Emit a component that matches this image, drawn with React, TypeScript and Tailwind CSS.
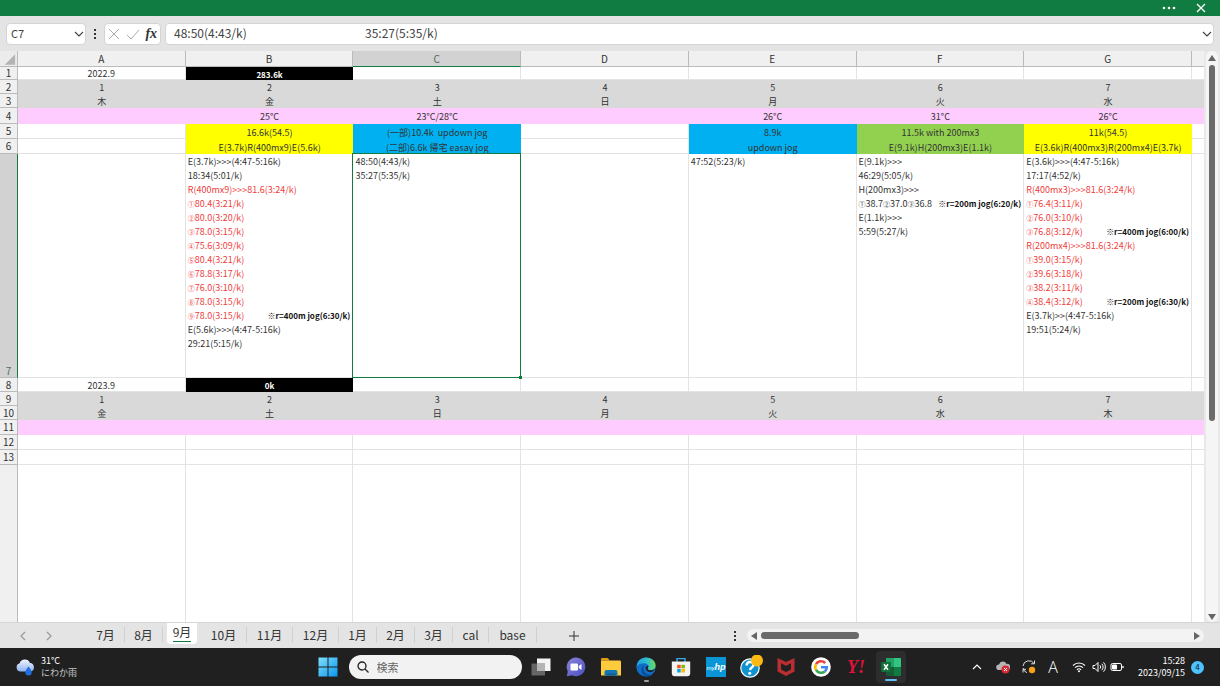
import React, { useState } from "react";
import clsx from "clsx";

interface ILine {
  text: string;
  red?: boolean;
  note?: string;
}

interface ITab {
  name: string;
  width: string;
}

const columns = ["A", "B", "C", "D", "E", "F", "G"];
const days = ["1", "2", "3", "4", "5", "6", "7"];
const weekdays2022 = ["木", "金", "土", "日", "月", "火", "水"];
const weekdays2023 = ["金", "土", "日", "月", "火", "水", "木"];
const temps = ["", "25°C", "23°C/28°C", "", "26°C", "31°C", "26°C"];
const fills = [
  "",
  "bg-[#ffff00]",
  "bg-[#00b0f0]",
  "",
  "bg-[#00b0f0]",
  "bg-[#92d050]",
  "bg-[#ffff00]",
];
const menuTop = [
  "",
  "16.6k(54.5)",
  "(一部)10.4k  updown jog",
  "",
  "8.9k",
  "11.5k with 200mx3",
  "11k(54.5)",
];
const menuBottom = [
  "",
  "E(3.7k)R(400mx9)E(5.6k)",
  "(二部)6.6k 帰宅 easay jog",
  "",
  "updown jog",
  "E(9.1k)H(200mx3)E(1.1k)",
  "E(3.6k)R(400mx3)R(200mx4)E(3.7k)",
];

const logs: ILine[][] = [
  [],
  [
    { text: "E(3.7k)>>>(4:47-5:16k)" },
    { text: "18:34(5:01/k)" },
    { text: "R(400mx9)>>>81.6(3:24/k)", red: true },
    { text: "①80.4(3:21/k)", red: true },
    { text: "②80.0(3:20/k)", red: true },
    { text: "③78.0(3:15/k)", red: true },
    { text: "④75.6(3:09/k)", red: true },
    { text: "⑤80.4(3:21/k)", red: true },
    { text: "⑥78.8(3:17/k)", red: true },
    { text: "⑦76.0(3:10/k)", red: true },
    { text: "⑧78.0(3:15/k)", red: true },
    { text: "⑨78.0(3:15/k)", red: true, note: "※r=400m jog(6:30/k)" },
    { text: "E(5.6k)>>>(4:47-5:16k)" },
    { text: "29:21(5:15/k)" },
  ],
  [{ text: "48:50(4:43/k)" }, { text: "35:27(5:35/k)" }],
  [],
  [{ text: "47:52(5:23/k)" }],
  [
    { text: "E(9.1k)>>>" },
    { text: "46:29(5:05/k)" },
    { text: "H(200mx3)>>>" },
    { text: "①38.7②37.0③36.8", note: "※r=200m jog(6:20/k)" },
    { text: "E(1.1k)>>>" },
    { text: "5:59(5:27/k)" },
  ],
  [
    { text: "E(3.6k)>>>(4:47-5:16k)" },
    { text: "17:17(4:52/k)" },
    { text: "R(400mx3)>>>81.6(3:24/k)", red: true },
    { text: "①76.4(3:11/k)", red: true },
    { text: "②76.0(3:10/k)", red: true },
    { text: "③76.8(3:12/k)", red: true, note: "※r=400m jog(6:00/k)" },
    { text: "R(200mx4)>>>81.6(3:24/k)", red: true },
    { text: "①39.0(3:15/k)", red: true },
    { text: "②39.6(3:18/k)", red: true },
    { text: "③38.2(3:11/k)", red: true },
    { text: "④38.4(3:12/k)", red: true, note: "※r=200m jog(6:30/k)" },
    { text: "E(3.7k)>>(4:47-5:16k)" },
    { text: "19:51(5:24/k)" },
  ],
];

const tabs: ITab[] = [
  { name: "7月", width: "w-[38px]" },
  { name: "8月", width: "w-[38px]" },
  { name: "9月", width: "w-[38px]" },
  { name: "10月", width: "w-[46px]" },
  { name: "11月", width: "w-[46px]" },
  { name: "12月", width: "w-[46px]" },
  { name: "1月", width: "w-[38px]" },
  { name: "2月", width: "w-[38px]" },
  { name: "3月", width: "w-[38px]" },
  { name: "cal", width: "w-[36px]" },
  { name: "base", width: "w-[48px]" },
];

const Chevron = ({ d, className }: { d: string; className?: string }) => (
  <svg viewBox="0 0 10 10" className={clsx("size-2.5", className)} fill="none" stroke="currentColor" strokeWidth="1.2">
    <path d={d} />
  </svg>
);

const Dots = () => (
  <svg viewBox="0 0 4 10" className="w-1 h-2.5" fill="#333">
    <rect x="1" y="0" width="2" height="2" />
    <rect x="1" y="4" width="2" height="2" />
    <rect x="1" y="8" width="2" height="2" />
  </svg>
);

function FormulaBar() {
  const [formula, setFormula] = useState(
    "48:50(4:43/k)" + " ".repeat(44) + "35:27(5:35/k)"
  );

  return (
    <div className="flex items-center h-[35px] pl-1.5 pr-1.5 bg-[#e4e4e4] text-[#444]">
      <div className="relative w-20 h-[22px]">
        <select
          aria-label="名前ボックス"
          className="block w-full h-full appearance-none rounded-sm border border-[#d4d4d4] bg-white pl-1 text-[11px]"
        >
          <option>C7</option>
        </select>
        <Chevron d="M1 3l4 4 4-4" className="absolute right-0.5 top-1.5 pointer-events-none" />
      </div>
      <div className="w-[18px] flex justify-center">
        <Dots />
      </div>
      <div className="flex items-center justify-around w-[57px] h-[22px] rounded-sm border border-[#d4d4d4] bg-white">
        <button type="button" aria-label="キャンセル">
          <svg viewBox="0 0 12 12" className="size-3" fill="none" stroke="#aaa">
            <path d="M1 1l10 10M11 1L1 11" />
          </svg>
        </button>
        <button type="button" aria-label="入力">
          <svg viewBox="0 0 14 12" className="w-3.5 h-3" fill="none" stroke="#aaa">
            <path d="M1 7l4 4L13 2" />
          </svg>
        </button>
        <button
          type="button"
          className="font-['Liberation_Serif',serif] italic font-bold text-sm leading-4 text-[#333]"
        >
          fx
        </button>
      </div>
      <div className="relative flex-1 ml-1 h-[22px]">
        <input
          aria-label="数式バー"
          value={formula}
          onChange={(e) => setFormula(e.target.value)}
          className="block w-full h-full rounded-sm border border-[#d4d4d4] bg-white pl-2 pb-0.5 text-[12px]"
        />
        <Chevron d="M1 3l4 4 4-4" className="absolute right-0.5 top-1.5 pointer-events-none" />
      </div>
    </div>
  );
}

function RowHead({ n, selected }: { n: string; selected?: boolean }) {
  return (
    <th
      scope="row"
      className={clsx(
        "p-0 border-r border-b font-normal text-[10px] leading-3 text-center",
        selected
          ? "bg-[#d2d2d2] border-r-[#107c41] border-b-[#bbb] text-[#4d6f5c] align-bottom"
          : "bg-[#f0f0f0] border-[#bbb] text-[#333]"
      )}
    >
      {n}
    </th>
  );
}

interface RowProps {
  n: string;
  cells: string[];
  height: string;
  fill?: string;
  cellFills?: string[];
}

function Row({ n, cells, height, fill, cellFills }: RowProps) {
  return (
    <tr className={height}>
      <RowHead n={n} />
      {columns.map((col, i) => {
        const bg = fill || (cellFills && cellFills[i]);
        return (
          <td
            key={col}
            className={clsx(
              "p-0 pt-px text-center whitespace-pre",
              bg || "border-r border-b border-[#e3e3e3]",
              bg === "bg-black" && "font-bold text-[8px] text-white"
            )}
          >
            {cells[i]}
          </td>
        );
      })}
      <td className={clsx("p-0", fill || "border-b border-[#e3e3e3]")}></td>
    </tr>
  );
}

// circled numbers are set a little smaller than the times next to them
function LogLine({ line }: { line: ILine }) {
  return (
    <div className="flex justify-between px-0.5 h-3.5 leading-[14px] whitespace-nowrap">
      <span className={line.red ? "text-[#f03c3c]" : ""}>
        {line.text.split(/([①-⑨])/).map((part, i) =>
          i % 2 ? (
            <span key={i} className="text-[7px]">
              {part}
            </span>
          ) : (
            part
          )
        )}
      </span>
      {line.note && <b className="text-[8px] text-[#111]">{line.note}</b>}
    </div>
  );
}

function Sheet() {
  const blank = ["", "", "", "", "", "", ""];
  const totalFills = ["", "bg-black", "", "", "", "", ""];
  return (
    <div className="flex-1 min-w-0">
      <table className="w-full h-full table-fixed border-separate border-spacing-0 bg-white text-[9px] leading-[11px] text-[#333]">
        <colgroup>
          <col className="w-[18px]" />
          {columns.map((col) => (
            <col key={col} />
          ))}
          <col className="w-3" />
        </colgroup>
        <thead>
          <tr className="h-4">
            <th className="p-0 bg-[#ececec] border-r border-b border-[#bbb]">
              <svg viewBox="0 0 18 14" className="w-[17px] h-3.5">
                <path d="M16 2v11H5z" fill="#b4b4b4" />
              </svg>
            </th>
            {columns.map((col) => (
              <th
                key={col}
                scope="col"
                className={clsx(
                  "p-0 border-r border-b font-normal text-[10px] leading-3",
                  col === "C"
                    ? "bg-[#d2d2d2] border-r-[#bbb] border-b-[#107c41] text-[#4d6f5c]"
                    : "bg-[#f0f0f0] border-[#bbb]"
                )}
              >
                {col}
              </th>
            ))}
            <th className="p-0 bg-[#f0f0f0] border-b border-[#bbb]"></th>
          </tr>
        </thead>
        <tbody>
          <Row n="1" height="h-[13px]" cells={["2022.9", "283.6k", "", "", "", "", ""]} cellFills={totalFills} />
          <Row n="2" height="h-3.5" cells={days} fill="bg-[#d9d9d9]" />
          <Row n="3" height="h-3.5" cells={weekdays2022} fill="bg-[#d9d9d9]" />
          <Row n="4" height="h-4" cells={temps} fill="bg-[#ffccff]" />
          <Row n="5" height="h-[15px]" cells={menuTop} cellFills={fills} />
          <Row n="6" height="h-[15px]" cells={menuBottom} cellFills={fills} />
          <tr className="h-56">
            <RowHead n="7" selected />
            {columns.map((col, i) => (
              <td
                key={col}
                className="relative p-0 pt-px border-r border-b border-[#e3e3e3] align-top"
              >
                {logs[i].map((line) => (
                  <LogLine key={line.text} line={line} />
                ))}
                {col === "C" && (
                  <div className="absolute -inset-px z-10 border border-[#107c41] pointer-events-none">
                    <span className="absolute -right-0.5 -bottom-0.5 size-[3px] bg-[#107c41]"></span>
                  </div>
                )}
              </td>
            ))}
            <td className="p-0 border-b border-[#e3e3e3]"></td>
          </tr>
          <Row n="8" height="h-3.5" cells={["2023.9", "0k", "", "", "", "", ""]} cellFills={totalFills} />
          <Row n="9" height="h-3.5" cells={days} fill="bg-[#d9d9d9]" />
          <Row n="10" height="h-3.5" cells={weekdays2023} fill="bg-[#d9d9d9]" />
          <Row n="11" height="h-[15px]" cells={blank} fill="bg-[#ffccff]" />
          <Row n="12" height="h-[15px]" cells={blank} />
          <Row n="13" height="h-[15px]" cells={blank} />
          <tr>
            <td className="p-0 bg-[#f0f0f0] border-r border-[#bbb]"></td>
            {columns.map((col) => (
              <td key={col} className="p-0 border-r border-[#e3e3e3]"></td>
            ))}
            <td className="p-0"></td>
          </tr>
        </tbody>
      </table>
    </div>
  );
}

function VerticalScroll() {
  return (
    <div className="w-4 flex flex-col items-center bg-[#e8e8e8] px-0.5">
      <div className="flex-1 w-3 flex flex-col items-center rounded-full bg-[#f5f5f5] pt-1 pb-0.5">
        <svg viewBox="0 0 8 6" className="w-2 h-1.5" fill="#666">
          <path d="M4 0l4 6H0z" />
        </svg>
        <div className="w-1.5 h-[63%] mt-1 rounded-full bg-[#6b6b6b]"></div>
        <svg viewBox="0 0 8 6" className="w-2 h-1.5 mt-auto" fill="#666">
          <path d="M4 6l4-6H0z" />
        </svg>
      </div>
    </div>
  );
}

function TabBar() {
  const [active, setActive] = useState("9月");

  return (
    <div className="flex items-center h-[26px] bg-[#e4e4e4] border-t border-[#d6d6d6] text-[#333]">
      <div className="flex w-[87px] pl-[18px] gap-4 text-[#999]">
        <button type="button" aria-label="前のシート">
          <Chevron d="M7 1L3 5l4 4" />
        </button>
        <button type="button" aria-label="次のシート">
          <Chevron d="M3 1l4 4-4 4" />
        </button>
      </div>
      {tabs.map((tab) => (
        <button
          key={tab.name}
          type="button"
          onClick={() => setActive(tab.name)}
          className={clsx(
            "flex justify-center h-full pb-1 text-[12px] leading-4",
            tab.width
          )}
        >
          {active === tab.name ? (
            <span className="h-full px-1.5 rounded-b-sm bg-white">
              <span className="block h-[19px] pt-px border-b border-[#107c41]">{tab.name}</span>
            </span>
          ) : (
            <span className="w-full h-4 mt-1 border-r border-[#d0d0d0]">{tab.name}</span>
          )}
        </button>
      ))}
      <button type="button" aria-label="新しいシート" className="ml-8">
        <svg viewBox="0 0 10 10" className="size-2.5" stroke="#333">
          <path d="M5 0v10M0 5h10" />
        </svg>
      </button>
      <div className="flex-1 flex justify-end pr-2.5">
        <Dots />
      </div>
      <div className="flex items-center w-3/8 h-[13px] mr-4 px-1 rounded-full bg-[#f3f3f3]">
        <svg viewBox="0 0 6 8" className="w-1.5 h-2" fill="#666">
          <path d="M0 4l6-4v8z" />
        </svg>
        <div className="ml-1 w-[22%] h-[7px] rounded-full bg-[#6b6b6b]"></div>
        <svg viewBox="0 0 6 8" className="w-1.5 h-2 ml-auto" fill="#666">
          <path d="M6 4L0 0v8z" />
        </svg>
      </div>
    </div>
  );
}

function TaskButton({ label, children }: { label: string; children: React.ReactNode }) {
  return (
    <button type="button" aria-label={label} className="relative flex items-center justify-center w-[35px] h-full">
      {children}
    </button>
  );
}

function Taskbar() {
  return (
    <div className="grid grid-cols-[1fr_auto_1fr] h-[38px] bg-[#202020] text-white text-[9px] leading-3">
      <div className="flex items-center gap-1.5 pl-[15px]">
        <svg viewBox="0 0 20 20" className="size-5">
          <defs>
            <linearGradient id="cloud" x1="0" y1="0" x2="0" y2="1">
              <stop offset="0" stopColor="#f0f5ff" />
              <stop offset="1" stopColor="#8fb2ee" />
            </linearGradient>
          </defs>
          <path d="M5 14.5a4.3 4.3 0 0 1-.4-8.3A5.6 5.6 0 0 1 15 6a4.3 4.3 0 0 1 .5 8.5z" fill="url(#cloud)" />
          <path d="M13.5 9.5c2 2.500 3.200 4 3.200 5.700a3.200 3.200 0 0 1-6.400 0c0-1.700 1.200-3.200 3.200-5.700z" fill="#1f6fe0" />
        </svg>
        <div>
          <div>31°C</div>
          <div className="text-[#c8c8c8]">にわか雨</div>
        </div>
      </div>

      <div className="flex items-center pl-1.5">
        <button type="button" aria-label="スタート">
          <svg viewBox="0 0 20 20" className="size-5">
            <defs>
              <linearGradient id="win" x1="0" y1="0" x2="1" y2="1">
                <stop offset="0" stopColor="#7fe0fb" />
                <stop offset="1" stopColor="#0a95ee" />
              </linearGradient>
            </defs>
            <path d="M.5.5h9v9h-9zM10.500.5h9v9h-9zM.5 10.500h9v9h-9zM10.500 10.500h9v9h-9z" fill="url(#win)" />
          </svg>
        </button>
        <div className="relative ml-[11px] mr-0.5">
          <svg viewBox="0 0 12 12" className="absolute left-2 top-1.5 size-3" fill="none" stroke="#222" strokeWidth="1.3">
            <circle cx="5" cy="5" r="4" />
            <path d="M8 8l3.500 3.500" />
          </svg>
          <input
            type="text"
            aria-label="検索"
            placeholder="検索"
            className="block w-[173px] h-6 rounded-full bg-[#f2f2f2] pl-7 text-[11px] text-[#333] placeholder:text-[#666]"
          />
        </div>
        <TaskButton label="タスク ビュー">
          <svg viewBox="0 0 20 20" className="size-5">
            <path d="M6 1.500h13.500V14H6z" fill="#f4f4f4" />
            <path d="M.5 6.500h13.500v12H.5z" fill="#6e6e6e" opacity=".9" />
            <path d="M6 6.500h8V14H6z" fill="#b5b5b5" />
          </svg>
        </TaskButton>
        <TaskButton label="チャット">
          <svg viewBox="0 0 20 20" className="size-5">
            <defs>
              <linearGradient id="chat" x1="0" y1="0" x2="1" y2="1">
                <stop offset="0" stopColor="#8a86d8" />
                <stop offset="1" stopColor="#4b4fc4" />
              </linearGradient>
            </defs>
            <path d="M10 .6a9.300 9.300 0 1 1-4 17.700L.8 19.200l1-4.800A9.300 9.300 0 0 1 10 .6z" fill="url(#chat)" />
            <rect x="4.500" y="6.500" width="7.500" height="7" rx="1.200" fill="#fff" />
            <path d="M12.800 9l2.700-2v6l-2.700-2z" fill="#fff" />
          </svg>
        </TaskButton>
        <TaskButton label="エクスプローラー">
          <svg viewBox="0 0 20 20" className="size-5">
            <path d="M0 2.200A1.200 1.200 0 0 1 1.200 1h5.600l2 2.500H0z" fill="#e39b0c" />
            <path d="M0 3.500h18.800A1.200 1.200 0 0 1 20 4.700V18.500H0z" fill="#fdcb3c" />
            <path d="M3.500 18.500V15a2 2 0 0 1 2-2h9a2 2 0 0 1 2 2v3.500z" fill="#1477b4" />
            <path d="M5.500 16.500h9v2h-9z" fill="#0e5f95" />
          </svg>
        </TaskButton>
        <TaskButton label="Edge">
          <svg viewBox="0 0 20 20" className="size-5">
            <defs>
              <linearGradient id="edge" x1="0" y1="0" x2="1" y2="0">
                <stop offset="0" stopColor="#1b9de2" />
                <stop offset=".6" stopColor="#35c1c8" />
                <stop offset="1" stopColor="#6fdc4c" />
              </linearGradient>
            </defs>
            <circle cx="10" cy="10" r="9.600" fill="#0f6fc6" />
            <path d="M.5 9.500C1 4 5 .4 10 .4c6 0 9.600 4 9.600 8.100 0 3-2.200 4.800-4.900 4.800-2 0-3-.8-3-1.500s.8-.9.8-2.300c0-1.700-1.800-3.300-4.300-3.300C4.500 6.200 1.500 8 .5 9.500z" fill="url(#edge)" />
            <path d="M7.200 10.800c0 4.200 3.700 7 7.300 7 1.500 0 2.700-.4 3.500-1.200a9.600 9.600 0 0 1-7 3C6.500 19 4.500 15 5.500 11.500c.5-1.700 1.700-3 3.500-3.800-1.200.8-1.800 1.900-1.800 3.100z" fill="#0b4f9c" />
            <path d="M12.200 8.500c.5 1.200-.5 2-.5 3.300 0 1 1.500 1.700 3 1.500 1.500 0 3-.6 4-1.500-1 3-3.500 3.700-5.500 3.300-2.700-.5-4-3-3.400-5z" fill="#202020" />
          </svg>
          <span className="absolute bottom-1 w-[5px] h-0.5 rounded-full bg-[#a0a0a0]"></span>
        </TaskButton>
        <TaskButton label="Microsoft Store">
          <svg viewBox="0 0 20 20" className="size-5">
            <path d="M6 5V1.600h8V5" fill="none" stroke="#35a9e0" strokeWidth="1.400" />
            <path d="M.8 4.500h18.400v12.300a2.400 2.400 0 0 1-2.400 2.400H3.200a2.400 2.400 0 0 1-2.400-2.400z" fill="#f3f3f3" />
            <path d="M6.200 7.800h3.500v3.500H6.200z" fill="#f25022" />
            <path d="M10.400 7.800h3.500v3.500h-3.500z" fill="#7fba00" />
            <path d="M6.200 12h3.500v3.500H6.200z" fill="#00a4ef" />
            <path d="M10.400 12h3.500v3.500h-3.500z" fill="#ffb900" />
          </svg>
        </TaskButton>
        <TaskButton label="myHP">
          <span className="flex items-baseline justify-center size-5 pt-1 bg-[#0a96d6] font-['Liberation_Sans',sans-serif] italic text-[6px] leading-3">
            my<b className="text-[9px]">hp</b>
          </span>
        </TaskButton>
        <TaskButton label="ヘルプ">
          <svg viewBox="0 0 24 24" className="size-6">
            <circle cx="11" cy="13" r="9.200" fill="#1193d0" stroke="#fff" strokeWidth="1.200" />
            <path d="M7.500 10.500c.3-2.500 2-3.700 4-3.500 2.200.2 3.300 1.800 2.900 3.400-.4 1.800-3 2-3.400 4.600" fill="none" stroke="#fff" strokeWidth="2.400" />
            <circle cx="10.700" cy="18.300" r="1.500" fill="#fff" />
            <circle cx="18" cy="5.500" r="6" fill="#fdb913" />
          </svg>
        </TaskButton>
        <TaskButton label="McAfee">
          <svg viewBox="0 0 20 20" className="size-5">
            <path d="M1.500 1L10 5l8.500-4v13.500L10 19l-8.500-4.500zM5 6.300v6.200L10 15l5-2.500V6.300L10 8.700z" fill="#b92e33" fillRule="evenodd" />
          </svg>
        </TaskButton>
        <TaskButton label="Google">
          <svg viewBox="0 0 20 20" className="size-5">
            <circle cx="10" cy="10" r="9.800" fill="#fff" />
            <g fill="none" strokeWidth="2.600">
              <path d="M14.200 6A5.800 5.800 0 0 0 5 7.200" stroke="#ea4335" />
              <path d="M5 7.200a5.800 5.800 0 0 0 0 5.600" stroke="#fbbc05" />
              <path d="M5 12.800a5.800 5.800 0 0 0 8.800 1.600" stroke="#34a853" />
              <path d="M13.800 14.400a5.800 5.800 0 0 0 2-4.200H10" stroke="#4285f4" />
            </g>
          </svg>
        </TaskButton>
        <TaskButton label="Yahoo">
          <span className="font-['Liberation_Serif',serif] italic font-bold text-lg leading-none text-[#e0123c]">
            Y!
          </span>
        </TaskButton>
        <TaskButton label="Excel">
          <span className="relative flex items-center justify-center w-[30px] h-8 rounded-sm bg-[#2d2d2d]">
            <svg viewBox="0 0 20 18" className="w-5 h-[18px]">
              <path d="M5 0h8v9H5z" fill="#21a366" />
              <path d="M13 0h6a1 1 0 0 1 1 1v8h-7z" fill="#33c481" />
              <path d="M5 9h8v9H6a1 1 0 0 1-1-1z" fill="#185c37" />
              <path d="M13 9h7v8a1 1 0 0 1-1 1h-6z" fill="#107c41" />
              <rect x="0" y="4" width="10" height="10" rx="1" fill="#0f7038" />
              <path d="M3 6.300l4 5.400M7 6.300l-4 5.400" stroke="#fff" strokeWidth="1.500" />
            </svg>
            <span className="absolute bottom-0.5 w-3 h-0.5 rounded-full bg-[#60c0f5]"></span>
          </span>
        </TaskButton>
      </div>

      <div className="flex items-center justify-end pr-4">
        <Chevron d="M1 7l4-4 4 4" className="mr-3.5" />
        <svg viewBox="0 0 14 14" className="size-3.5 mr-3">
          <path d="M3 10a2.800 2.800 0 0 1 0-5.600A4 4 0 0 1 10.500 4 3 3 0 0 1 12 10z" fill="#b5b5b5" />
          <circle cx="9.500" cy="9.500" r="4" fill="#d92a36" />
          <path d="M8 8l3 3M11 8l-3 3" stroke="#fff" />
        </svg>
        <svg viewBox="0 0 14 14" className="size-3.5 mr-3" fill="none" stroke="#ddd">
          <path d="M1 6a6 6 0 0 1 11-2.500M12.500.5v3.300H9.200M1 8a6 6 0 0 0 4 4.700M1 12.500V9.300h3" />
          <circle cx="10" cy="10" r="3.200" fill="#f7a11a" stroke="none" />
        </svg>
        <span className="text-base leading-4 mr-3.5 font-['Open_Sans',sans-serif] font-light">A</span>
        <svg viewBox="0 0 14 12" className="w-3.5 h-3 mr-1.5" fill="none" stroke="#fff" strokeWidth="1.100">
          <path d="M1 4.500a8.500 8.500 0 0 1 12 0M3 6.700a5.600 5.600 0 0 1 8 0M4.900 8.800a3 3 0 0 1 4.200 0" />
          <circle cx="7" cy="10.300" r="1" fill="#fff" stroke="none" />
        </svg>
        <svg viewBox="0 0 14 12" className="w-3.5 h-3 mr-1" fill="none" stroke="#fff">
          <path d="M1 4.500h2L6 1.500v9l-3-3H1zM8 4.300a2.500 2.500 0 0 1 0 3.400M9.800 2.800a4.600 4.600 0 0 1 0 6.400M11.500 1.300a6.800 6.800 0 0 1 0 9.400" />
        </svg>
        <svg viewBox="0 0 14 12" className="w-3.5 h-3 mr-3.5" fill="none" stroke="#fff">
          <rect x="1" y="2.500" width="10.500" height="7" rx="1.500" />
          <path d="M2.500 4h4v4h-4z" fill="#fff" />
          <path d="M13 5v2" strokeWidth="1.400" />
        </svg>
        <div className="text-right">
          <div>15:28</div>
          <div>2023/09/15</div>
        </div>
        <span className="flex items-center justify-center size-[13px] ml-1.5 rounded-full bg-[#4cc2ff] text-[8px] text-[#111]">
          4
        </span>
      </div>
    </div>
  );
}

export default function App() {
  return (
    <div className="flex flex-col h-screen min-h-[620px] overflow-hidden bg-[#e4e4e4] font-['Noto_Sans_CJK_JP',sans-serif]">
      <div className="flex items-center justify-end h-4 shrink-0 gap-5 pr-3.5 bg-[#107c41]">
        <button type="button" aria-label="その他">
          <svg viewBox="0 0 14 4" className="w-3.5 h-1" fill="#fff">
            <circle cx="2" cy="2" r="1.300" />
            <circle cx="7" cy="2" r="1.300" />
            <circle cx="12" cy="2" r="1.300" />
          </svg>
        </button>
        <button type="button" aria-label="閉じる">
          <svg viewBox="0 0 10 10" className="size-2.5" stroke="#fff" strokeWidth="1.300">
            <path d="M1 1l8 8M9 1L1 9" />
          </svg>
        </button>
      </div>
      <FormulaBar />
      <div className="flex flex-1 min-h-0">
        <Sheet />
        <VerticalScroll />
      </div>
      <TabBar />
      <Taskbar />
    </div>
  );
}
